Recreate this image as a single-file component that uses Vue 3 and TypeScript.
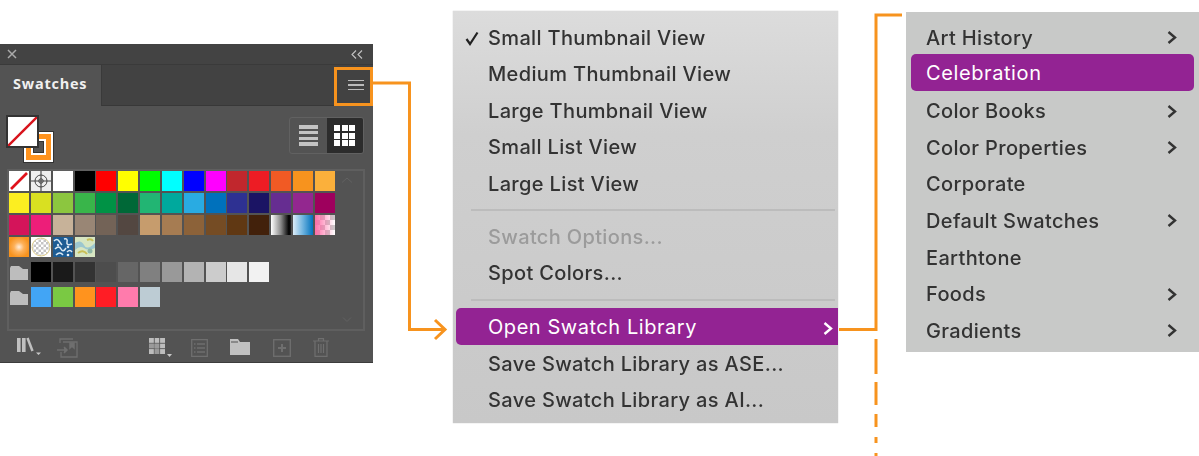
<script setup lang="ts">
const row1 = ['#ffffff','#eeeeee','#ffffff','#000000','#ff0000','#ffff00','#00ff00','#00ffff','#0000ff','#ff00ff','#c1272d','#ed1c24','#f15a24','#f7931e','#fbb03b']
const row2 = ['#fcee21','#d9e021','#8cc63f','#39b54a','#009245','#006837','#22b573','#00a99d','#29abe2','#0071bc','#2e3192','#1b1464','#662d91','#93278f','#9e005d']
const row3 = ['#d4145a','#ed1e79','#c7b299','#998675','#736357','#534741','#c69c6d','#a67c52','#8c6239','#754c24','#603813','#42210b']
const grays = ['#000000','#1a1a1a','#333333','#4d4d4d','#666666','#808080','#999999','#b3b3b3','#cccccc','#e6e6e6','#f2f2f2']
const brights = ['#42a5f5','#7ac943','#ff931e','#ff1d25','#ff7bac','#bdccd4']
const menuA = ['Small Thumbnail View','Medium Thumbnail View','Large Thumbnail View','Small List View','Large List View']
const sub = [
  { t: 'Art History', a: true }, { t: 'Celebration', a: false, on: true }, { t: 'Color Books', a: true },
  { t: 'Color Properties', a: true }, { t: 'Corporate', a: false }, { t: 'Default Swatches', a: true },
  { t: 'Earthtone', a: false }, { t: 'Foods', a: true }, { t: 'Gradients', a: true },
]
const folderPath = 'M0 2 L1 0 H9 L13 3 H18 V14 H0 Z'
</script>

<template>
  <div class="canvas">
    <section class="panel">
      <header class="titlebar">
        <svg width="10" height="10" viewBox="0 0 10 10"><path d="M1 1 L9 9 M9 1 L1 9" stroke="#aaa" stroke-width="1.5" fill="none"/></svg>
        <svg width="12" height="9" viewBox="0 0 12 9"><path d="M5 .5 L1 4.5 L5 8.5 M11 .5 L7 4.5 L11 8.5" stroke="#c4c4c4" stroke-width="1.1" fill="none"/></svg>
      </header>
      <div class="tabs">
        <div class="tab">Swatches</div>
        <div class="tabrest">
          <div class="hamb"><i></i><i></i><i></i></div>
        </div>
      </div>
      <div class="tools">
        <div class="fillstroke">
          <div class="stroke"><span></span></div>
          <div class="fill">
            <svg width="29" height="29" viewBox="0 0 29 29"><path d="M0 29 L29 0" stroke="#d8131c" stroke-width="2.4"/></svg>
          </div>
        </div>
        <div class="views">
          <div class="view">
            <i v-for="n in 4" :key="n"></i>
          </div>
          <div class="view on">
            <b v-for="n in 9" :key="n"></b>
          </div>
        </div>
      </div>
      <div class="list">
        <div class="grid">
          <div v-for="(c, i) in row1" :key="'a' + i" class="sw" :style="{ background: c }">
            <svg v-if="i === 0" viewBox="0 0 20 20"><path d="M2 18 L18 2" stroke="#e0121b" stroke-width="2.6"/></svg>
            <svg v-if="i === 1" viewBox="0 0 20 20"><circle cx="10" cy="10" r="6" fill="none" stroke="#444"/><circle cx="10" cy="10" r="2.2" fill="none" stroke="#444"/><path d="M0 10 H20 M10 0 V20" stroke="#444" stroke-width="1.1"/></svg>
          </div>
          <div v-for="(c, i) in row2" :key="'b' + i" class="sw" :style="{ background: c }"></div>
          <div v-for="(c, i) in row3" :key="'c' + i" class="sw" :style="{ background: c }"></div>
          <div class="sw grad1"></div>
          <div class="sw grad2"></div>
          <div class="sw pinkc"></div>
          <div class="sw radial"></div>
          <div class="sw"><svg viewBox="0 0 20 20"><rect width="20" height="20" fill="#fff"/><defs><pattern id="ck" width="5" height="5" patternUnits="userSpaceOnUse"><rect width="5" height="5" fill="#fff"/><rect width="2.5" height="2.5" fill="#c4c4c4"/><rect x="2.5" y="2.5" width="2.5" height="2.5" fill="#c4c4c4"/></pattern></defs><circle cx="10" cy="10" r="9" fill="url(#ck)" stroke="#e0cf8a"/></svg></div>
          <div class="sw"><svg viewBox="0 0 20 20"><rect width="20" height="20" fill="#1d5c94"/><path d="M1 4 Q4 1 6 4 T9 8 M11 2 Q15 1 14 5 T19 7 M2 12 Q6 8 8 12 T13 11 M3 18 Q7 14 10 18 M14 15 Q17 12 19 15" stroke="#dbe8f2" stroke-width="1.500" fill="none"/><circle cx="15" cy="10" r="1.300" fill="#cfe0ee"/><circle cx="5" cy="8" r="1.200" fill="#cfe0ee"/><circle cx="15" cy="18" r="1.300" fill="#e9f0f6"/></svg></div>
          <div class="sw"><svg viewBox="0 0 20 20"><rect width="20" height="20" fill="#d7e6c2"/><path d="M0 6 Q6 2 9 8 T20 6 V11 Q13 14 9 11 T0 13Z" fill="#9cc7cf"/><path d="M3 16 Q8 12 12 17 M12 3 Q16 1 18 4" stroke="#c9bf55" stroke-width="2" fill="none"/><circle cx="15" cy="14" r="2.500" fill="#8fb8a8"/></svg></div>
        </div>
        <div class="group g1">
          <svg class="folder" viewBox="0 0 18 14" width="18" height="14"><path :d="folderPath" fill="#bdbdbd"/></svg>
          <div v-for="c in grays" :key="c" class="sw" :style="{ background: c }"></div>
        </div>
        <div class="group g2">
          <svg class="folder" viewBox="0 0 18 14" width="18" height="14"><path :d="folderPath" fill="#bdbdbd"/></svg>
          <div v-for="c in brights" :key="c" class="sw" :style="{ background: c }"></div>
        </div>
        <svg class="scroll up" width="12" height="6" viewBox="0 0 12 6"><path d="M1 5.500 L6 1 L11 5.500" stroke="#626262" fill="none"/></svg>
        <svg class="scroll down" width="10" height="5" viewBox="0 0 10 5"><path d="M1 .5 L5 4.500 L9 .5" stroke="#626262" fill="none"/></svg>
      </div>
      <footer class="bottom">
        <svg class="b1" width="26" height="18" viewBox="0 0 26 18"><path d="M1 1 H4.600 V15 H1 Z M6 1 H9.600 V15 H6 Z" fill="#c0c0c0"/><path d="M11.500 1 L16.500 14" stroke="#c0c0c0" stroke-width="2.500"/><path d="M20 15.500 H25 L22.500 18 Z" fill="#c8c8c8"/></svg>
        <svg class="b2" width="21" height="20" viewBox="0 0 21 20"><path d="M3 5 V1 H16 M6 4 H20 V19 H4 V14" stroke="#6f6f6f" stroke-width="1.300" fill="none"/><path d="M0 12 H10 M7 9 L10 12 L7 15 M13 5 V10 L15 8 L17 10 V5Z" stroke="#6f6f6f" stroke-width="1.500" fill="#6f6f6f"/></svg>
        <svg class="b3" width="23" height="20" viewBox="0 0 23 20"><path d="M0 0 H16 V16 H0Z" fill="#bdbdbd"/><path d="M5.300 0 V16 M10.600 0 V16 M0 5.300 H16 M0 10.600 H16" stroke="#5a5a5a" stroke-width=".9"/><path d="M0 5.800 H10 V16 H5.800 V10.200 H0Z" fill="#8b8b8b" opacity=".7"/><path d="M18 16 H23 L20.500 19 Z" fill="#c8c8c8"/></svg>
        <svg class="b4" width="17" height="18" viewBox="0 0 17 18"><path d="M.7 .7 H16.300 V17.300 H.7 Z" stroke="#6f6f6f" stroke-width="1.300" fill="none"/><path d="M3 5 H4.500 M6 5 H14 M3 9 H4.500 M6 9 H14 M3 13 H4.500 M6 13 H14" stroke="#6f6f6f" stroke-width="1.300"/></svg>
        <svg class="b5" width="20" height="16" viewBox="0 0 20 16"><path d="M0 0 H8 L10 3 H20 V16 H0 Z" fill="#c0c0c0"/><path d="M1 3 H8" stroke="#535353"/></svg>
        <svg class="b6" width="18" height="18" viewBox="0 0 18 18"><rect x=".7" y=".7" width="16.600" height="16.600" fill="none" stroke="#6f6f6f" stroke-width="1.300"/><path d="M9 5 V13 M5 9 H13" stroke="#6f6f6f" stroke-width="2"/></svg>
        <svg class="b7" width="16" height="19" viewBox="0 0 16 19"><path d="M0 3 H16 M5.500 3 V.7 H10.500 V3 M2 3 V18.300 H14 V3 M5.500 6 V15 M8 6 V15 M10.500 6 V15" stroke="#6f6f6f" stroke-width="1.200" fill="none"/></svg>
      </footer>
    </section>

    <nav class="menu">
      <div v-for="(t, i) in menuA" :key="t" class="item">
        <svg v-if="i === 0" class="check-m" width="14" height="15" viewBox="0 0 14 15"><path d="M1.500 8 L5 13 L12.500 1.500" stroke="#222" stroke-width="2.200" fill="none"/></svg>
        {{ t }}
      </div>
      <hr class="sep" />
      <div class="item muted">Swatch Options...</div>
      <div class="item">Spot Colors...</div>
      <hr class="sep s2" />
      <div class="item active">
        Open Swatch Library
        <svg class="chev" width="10" height="13" viewBox="0 0 10 13"><path d="M1.500 1 L8 6.500 L1.500 12" stroke="#fff" stroke-width="2.400" fill="none"/></svg>
      </div>
      <div class="item after">Save Swatch Library as ASE...</div>
      <div class="item">Save Swatch Library as AI...</div>
    </nav>

    <nav class="submenu">
      <div v-for="s in sub" :key="s.t" class="sitem" :class="{ active: s.on }">
        {{ s.t }}
        <svg v-if="s.a" width="10" height="13" viewBox="0 0 10 13"><path d="M1.500 1 L8 6.500 L1.500 12" stroke="#333" stroke-width="2.400" fill="none"/></svg>
      </div>
    </nav>

    <svg class="wires" width="1199" height="456" viewBox="0 0 1199 456">
      <g fill="none" stroke="#f7931e" stroke-width="3">
        <rect x="335.500" y="68.500" width="36" height="36"/>
        <path d="M373 83 H409.500 V329.500 H444"/>
        <path d="M435 320 L445 329.500 L435 339"/>
        <path d="M839 329.500 H876 V15 H902"/>
        <path d="M876 339 V374 M876 382 V405 M876 414 V427 M876 437 V443 M876 453 V456"/>
      </g>
    </svg>
  </div>
</template>

<style>
html, body { margin: 0; background: #fff; }
</style>

<style scoped>
.canvas { position: relative; width: 1199px; height: 456px; overflow: hidden; background: #fff; font-family: "Inter", "Liberation Sans", sans-serif; }
.wires { position: absolute; left: 0; top: 0; pointer-events: none; }

.panel { position: absolute; left: 0; top: 44px; width: 373px; height: 319px; background: #535353; display: flex; flex-direction: column; border-bottom: 1px solid #3c3c3c; box-sizing: border-box; }
.titlebar { height: 20px; background: #434343; border-bottom: 1px solid #3a3a3a; display: flex; justify-content: space-between; align-items: center; padding: 0 10px 0 7px; }
.tabs { height: 41px; display: flex; }
.tab { width: 101px; background: #535353; color: #f0f0f0; font: 700 14.500px/38px "Open Sans", "Liberation Sans", sans-serif; letter-spacing: .75px; padding-left: 13px; box-sizing: border-box; }
.tabrest { flex: 1; background: #424242; border-left: 1px solid #3a3a3a; border-bottom: 1px solid #383838; display: flex; justify-content: flex-end; }
.hamb { width: 38px; height: 40px; display: flex; flex-direction: column; justify-content: center; align-items: center; gap: 3px; padding: 0 0 0 4px; box-sizing: border-box; }
.hamb i { width: 16px; height: 1.500px; background: #bbb; }
.tools { height: 64px; display: flex; justify-content: space-between; padding: 10px 9px 0 7px; box-sizing: border-box; }
.fillstroke { position: relative; width: 48px; height: 47px; }
.fill { position: absolute; left: 0; top: 0; width: 29px; height: 29px; background: #fff; outline: 2px solid #333; outline-offset: 0; margin: 1px; }
.fill svg { display: block; }
.stroke { position: absolute; left: 17px; top: 16px; width: 29px; height: 30px; background: #ff931e; border: 2px solid #fff; outline: 1px solid #333; box-sizing: border-box; display: flex; align-items: center; justify-content: center; }
.stroke span { width: 15px; height: 16px; background: #535353; border: 2px solid #fff; box-shadow: inset 0 0 0 1px #333; box-sizing: border-box; }
.views { display: flex; width: 75px; height: 37px; margin-top: 1px; border-radius: 3px; overflow: hidden; border: 1px solid #616161; box-sizing: border-box; }
.view { flex: 1; display: flex; flex-direction: column; gap: 2.300px; align-items: center; justify-content: center; }
.view i { width: 19px; height: 3.500px; background: #c4c4c4; }
.view.on { background: #2c2c2c; display: grid; grid-template-columns: repeat(3, 6px); grid-auto-rows: 6px; gap: 1.500px; justify-content: center; align-content: center; align-items: stretch; }
.view.on b { display: block; background: #fff; }
.list { position: relative; margin-left: 7px; width: 358px; height: 162px; border: 2px solid #5f5f5f; box-sizing: border-box; margin-top: -1px; }
.grid { display: grid; grid-template-columns: repeat(15, 20px); grid-auto-rows: 20px; column-gap: 1.850px; row-gap: 2px; }
.sw { width: 20px; height: 20px; }
.sw svg { display: block; width: 20px; height: 20px; }
.grad1 { background: linear-gradient(90deg, #fff, #888 50%, #000 90%, #222); }
.grad2 { background: linear-gradient(90deg, #dcecf7, #6db2de 50%, #0071bc); }
.pinkc { background-image: linear-gradient(90deg, rgba(255,105,165,.95), rgba(255,130,180,0)), repeating-conic-gradient(#c9c9c9 0 25%, #fff 0 50%); background-size: 100% 100%, 10px 10px; }
.radial { background: radial-gradient(circle, #ffeedd 0, #fdb15a 35%, #f7931e 75%); }
.group { display: flex; gap: 1.850px; align-items: flex-start; margin-top: 5px; }
.folder { width: 18px; height: 14px; margin: 4px 1px 0 1px; flex: none; }
.scroll { position: absolute; }
.scroll.up { right: 10px; top: 6px; }
.scroll.down { right: 11px; bottom: 7px; }
.bottom { position: relative; flex: 1; }
.bottom svg { position: absolute; }
.b1 { left: 16px; top: 6px; } .b2 { left: 57px; top: 7px; } .b3 { left: 149px; top: 7px; }
.b4 { left: 191px; top: 8px; } .b5 { left: 230px; top: 8px; } .b6 { left: 273px; top: 8px; } .b7 { left: 313px; top: 7px; }

.menu { position: absolute; left: 453px; top: 11px; width: 385px; height: 412px; background: linear-gradient(180deg, #dcdcdc 0, #cfcfcf 30%, #c8c8c8 100%); box-sizing: border-box; padding-top: 9px; color: #333; box-shadow: 0 0 1px #bbb; }
.item { position: relative; height: 36.400px; line-height: 36.400px; padding-left: 35px; font-size: 20px; font-weight: 500; letter-spacing: .35px; white-space: nowrap; filter: blur(.4px); }
.item.after { margin-top: 1px; }
.check-m { position: absolute; left: 12px; top: 11px; }
.muted { color: #9b9b9b; }
.sep { height: 2px; border: 0; background: #bcbcbc; margin: 7.500px 3px 7.500px 18px; }
.sep.s2 { margin-bottom: 6.500px; }
.item.active { margin-left: 3px; padding-left: 32px; background: #932393; color: #fff; border-radius: 5px 0 0 5px; filter: none; font-weight: 400; letter-spacing: .55px; height: 37px; line-height: 38px; }
.chev { position: absolute; right: 5px; top: 14px; }

.submenu { position: absolute; left: 906px; top: 12px; width: 293px; height: 340px; background: #c8c9c8; box-sizing: border-box; padding: 6px 5px 0; color: #333; }
.sitem { height: 36.670px; display: flex; align-items: center; justify-content: space-between; padding: 0 17px 0 15px; font-size: 20px; font-weight: 500; letter-spacing: .35px; filter: blur(.4px); }
.sitem:first-child { height: 36px; padding-top: 3px; box-sizing: border-box; }
.sitem.active { background: #932393; color: #fff; border-radius: 5px; filter: none; font-weight: 400; letter-spacing: .6px; height: 37px; margin-bottom: 1.700px; }
</style>
